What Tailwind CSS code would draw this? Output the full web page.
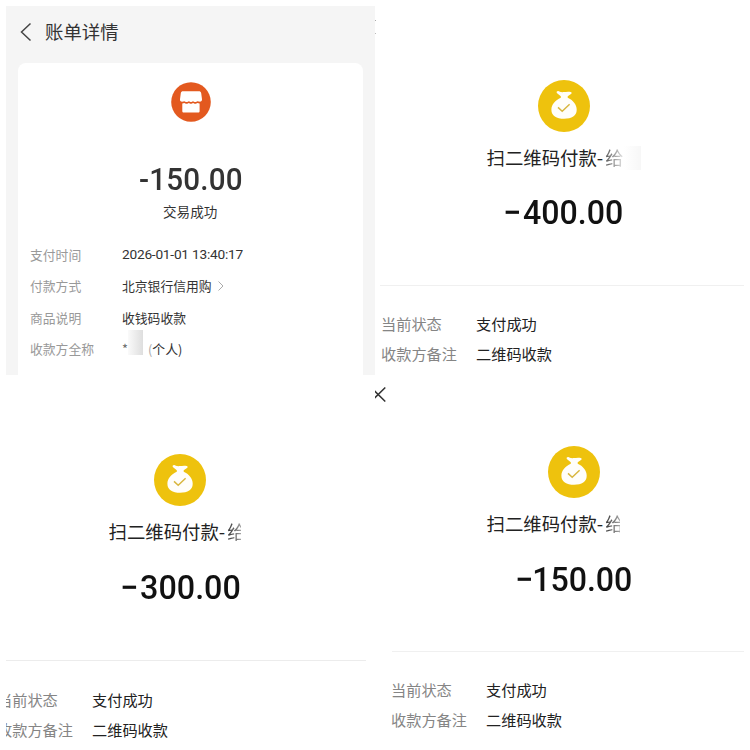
<!DOCTYPE html>
<html lang="zh-CN">
<head>
<meta charset="utf-8">
<title>账单详情</title>
<script src="https://cdn.jsdelivr.net/npm/@tailwindcss/browser@4"></script>
</head>
<body class="bg-white font-['Noto_Sans_CJK_SC',sans-serif]">
<svg class="hidden">
  <symbol id="bag" viewBox="0 0 52 52">
    <circle cx="26" cy="26" r="26" fill="#eec20d"/>
    <path d="M18.800 13c-.6-1.400.6-2.200 1.900-1.800 1.600.6 3 1.100 5 .9 2.400-.3 4.600-.7 7.100-.1 1.200.4 1.100 1.300.2 1.900l-3.300 2.300v1.600c5.200 2.300 9 6.800 9 12 0 6.200-5 9-12.600 9s-12.700-3-12.700-9.100c0-5.200 3.900-9.500 9.400-11.900v-1.500z" fill="#fffefa"/>
    <path d="M20 27.400l4.200 3.800 7.400-6.900" fill="none" stroke="#d9b740" stroke-width="1.500"/>
  </symbol>
</svg>
<main class="grid h-[750px] w-[750px] grid-cols-[369px_369px] grid-rows-[369px_369px] overflow-hidden pt-1.5 pl-1.5">

  <section class="overflow-hidden bg-[#f5f5f5] px-3 text-[#333]">
    <header class="flex h-[57px] items-center pb-2 pl-0.5">
      <svg class="mt-0.5 h-5 w-3" viewBox="0 0 12 20" fill="none" stroke="#444" stroke-width="1.500"><path d="M10.500 1.500L1.500 10l9 8.500"/></svg>
      <h1 class="ml-[13px] text-[18.400px] leading-6">账单详情</h1>
    </header>
    <div class="h-[320px] w-[345px] rounded-t-lg bg-white pt-[19px]">
      <svg class="ml-[152.500px] size-10" viewBox="0 0 40 40">
        <circle cx="20" cy="20" r="19.800" fill="#e3591f"/>
        <path d="M12.300 9.300h15.400c1.500 0 2.200.6 2.500 2l.8 5.900c.2 1.600-.8 2.500-2.200 2.500-1 0-1.500-.4-2.300-.4s-1.300.8-2.300.8-1.400-.8-2.200-.8-1.300.8-2 .8-1.300-.8-2.100-.8-1.300.8-2.300.8-1.500-.8-2.300-.8-1.300.4-2.200.4c-1.500 0-2.300-.9-2.100-2.500l.8-5.900c.3-1.400.9-2 2.500-2z" fill="#fff"/>
        <path d="M11.300 21.400c.8 0 1.300-.5 2-.5.900 0 1.300.8 2.300.8s1.400-.8 2.200-.8 1.300.8 2.100.8 1.400-.8 2.200-.8 1.300.8 2.200.8 1.300-.8 2.100-.8 1.300.5 2.200.5v7.700c0 1-.5 1.500-1.500 1.500h-14.300c-1 0-1.500-.5-1.500-1.500z" fill="#fff"/>
      </svg>
      <p class="mt-[38px] ml-[121px] h-10 w-fit origin-left scale-x-[.94] font-['Roboto',sans-serif] text-[31.500px] leading-10 font-medium tracking-[0.200px] whitespace-nowrap">-150.00</p>
      <p class="mt-px ml-[145px] text-[13.600px] leading-5">交易成功</p>
      <dl class="mt-[18px] ml-3 grid grid-cols-[92px_1fr] auto-rows-[31.300px] items-center text-[12.800px] whitespace-nowrap">
        <dt class="text-[#999]">支付时间</dt><dd class="font-['Roboto','Noto_Sans_CJK_SC',sans-serif] text-[13.700px] tracking-[-0.230px]">2026-01-01 13:40:17</dd>
        <dt class="text-[#999]">付款方式</dt><dd class="flex items-center gap-1.5">北京银行信用购<svg class="h-2.5 w-1.5" viewBox="0 0 6 10" fill="none" stroke="#aaa"><path d="M.5.5L5 5 .5 9.500"/></svg></dd>
        <dt class="text-[#999]">商品说明</dt><dd>收钱码收款</dd>
        <dt class="text-[#999]">收款方全称</dt>
        <dd class="flex items-center"><span class="w-1.5 text-[#666]">*</span><span class="mr-[5px] mb-3 h-[25px] w-[15px] bg-linear-to-r from-[#fafafa] to-[#dedede]"></span><span><span class="text-[#aaa]">(</span>个人)</span></dd>
      </dl>
    </div>
  </section>

  <section class="relative overflow-hidden text-[#222]">
    <svg class="mt-[73.500px] ml-[163px] size-[52px]"><use href="#bag"/></svg>
    <div class="mt-[12.500px] ml-[111.500px] flex h-7 items-center text-[18.400px] whitespace-nowrap">
      <span class="mr-0.5">扫二维码付款-</span><span class="bg-linear-to-r from-[#555] to-[#eee] bg-clip-text text-transparent">给</span><span class="h-6 w-[17px] bg-linear-to-r from-white to-[#f7f7f7]"></span>
    </div>
    <p class="mt-5 ml-[128px] flex h-10 w-fit origin-left scale-x-[.945] items-center font-['Roboto',sans-serif] text-[34px] leading-10 font-medium whitespace-nowrap text-[#111]"><span class="mr-[2px]">−</span>400.00</p>
    <hr class="mt-[53px] ml-[5px] border-[#f0f0f0]">
    <dl class="mt-[22px] ml-[6px] grid grid-cols-[95px_1fr] auto-rows-[30.500px] items-center text-[15.200px] whitespace-nowrap">
      <dt class="text-[#858585]">当前状态</dt><dd>支付成功</dd>
      <dt class="text-[#858585]">收款方备注</dt><dd>二维码收款</dd>
    </dl>
    <div class="absolute top-[14px] left-0 flex flex-col gap-3"><i class="size-px bg-[#aaa]"></i><i class="size-px bg-[#bbb]"></i></div>
  </section>

  <section class="overflow-hidden text-[#222]">
    <svg class="mt-[78.500px] ml-[148px] size-[52px]"><use href="#bag"/></svg>
    <div class="mt-[12.500px] ml-[102.500px] flex h-7 w-[132px] items-center overflow-hidden text-[18.400px] whitespace-nowrap">
      <span class="mr-0.5">扫二维码付款-</span><span class="bg-linear-to-r from-[#333] via-[#777] to-[#ddd] bg-clip-text text-transparent">给</span>
    </div>
    <p class="mt-[21px] ml-[114px] flex h-10 w-fit origin-left scale-x-[.95] items-center font-['Roboto',sans-serif] text-[34px] leading-10 font-medium whitespace-nowrap text-[#111]"><span class="mr-[2px]">−</span>300.00</p>
    <hr class="mt-[53px] w-[360px] border-[#ececec]">
    <dl class="mt-[23px] -ml-[9px] grid grid-cols-[95px_1fr] auto-rows-[30.500px] items-center text-[15.200px] whitespace-nowrap">
      <dt class="text-[#858585]">当前状态</dt><dd>支付成功</dd>
      <dt class="text-[#858585]">收款方备注</dt><dd>二维码收款</dd>
    </dl>
  </section>

  <section class="relative overflow-hidden text-[#222]">
    <svg class="absolute top-[11px] left-0 h-4 w-[11px]" viewBox="0 0 11 16" fill="none" stroke="#333" stroke-width="1.500"><path d="M-4 1.500L10.300 15.500M-4 15.500L10.300 1.500"/></svg>
    <svg class="mt-[70.500px] ml-[173px] size-[52px]"><use href="#bag"/></svg>
    <div class="mt-[12.500px] ml-[111.500px] flex h-7 items-center text-[18.400px] whitespace-nowrap">
      <span class="mr-0.5">扫二维码付款-</span><span class="w-[15px] overflow-hidden bg-linear-to-r from-[#333] to-[#aaa] bg-clip-text text-transparent">给</span>
    </div>
    <p class="mt-[21px] ml-[140px] flex h-10 w-fit origin-left scale-x-[.945] items-center font-['Roboto',sans-serif] text-[34px] leading-10 font-medium whitespace-nowrap text-[#111]"><span class="-mr-px">−</span>150.00</p>
    <hr class="mt-[52px] ml-[17px] border-[#f0f0f0]">
    <dl class="mt-[22px] ml-4 grid grid-cols-[95px_1fr] auto-rows-[30.500px] items-center text-[15.200px] whitespace-nowrap">
      <dt class="text-[#858585]">当前状态</dt><dd>支付成功</dd>
      <dt class="text-[#858585]">收款方备注</dt><dd>二维码收款</dd>
    </dl>
  </section>
</main>
</body>
</html>
